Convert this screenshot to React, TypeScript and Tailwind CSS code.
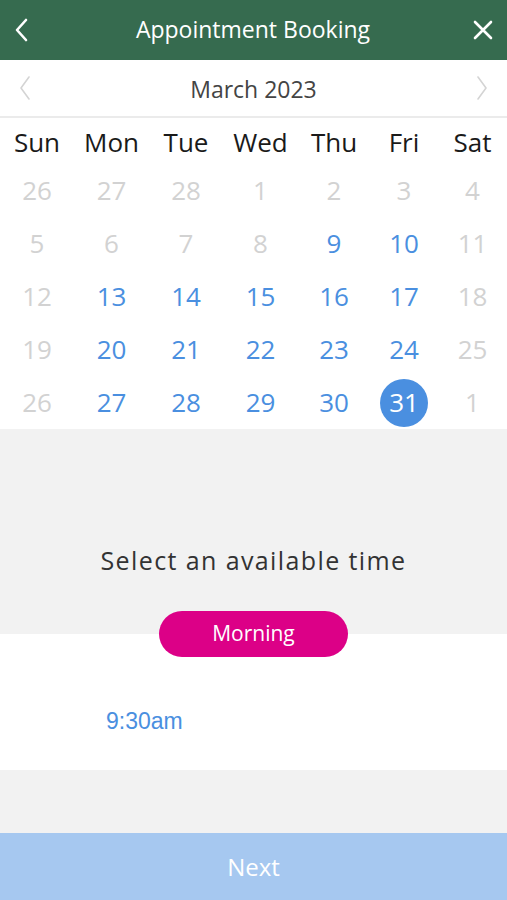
import { useState } from 'react';

const days = ['Sun', 'Mon', 'Tue', 'Wed', 'Thu', 'Fri', 'Sat'];

// each cell: [label, enabled]
const weeks: [number, boolean][][] = [
  [[26, false], [27, false], [28, false], [1, false], [2, false], [3, false], [4, false]],
  [[5, false], [6, false], [7, false], [8, false], [9, true], [10, true], [11, false]],
  [[12, false], [13, true], [14, true], [15, true], [16, true], [17, true], [18, false]],
  [[19, false], [20, true], [21, true], [22, true], [23, true], [24, true], [25, false]],
  [[26, false], [27, true], [28, true], [29, true], [30, true], [31, true], [1, false]],
];

const cols = 'grid grid-cols-[74px_75px_74px_75px_72px_68px_69px]';

export default function App() {
  const [selected, setSelected] = useState('4-5');

  return (
    <div className="w-[507px] h-[900px] flex flex-col bg-[#f2f2f2] font-['Open_Sans',sans-serif] overflow-hidden">
      <div className="h-[60px] bg-[#366b4f] flex items-center justify-between px-[14px] text-white">
        <svg width="16" height="26" viewBox="0 0 16 26" fill="none" stroke="currentColor" strokeWidth="2.6" strokeLinecap="round" strokeLinejoin="round">
          <path d="M12 3 L3 13 L12 23" />
        </svg>
        <h1 className="text-[23px] leading-none -mt-[1px] ml-[4px]">Appointment Booking</h1>
        <svg width="22" height="22" viewBox="0 0 22 22" fill="none" stroke="currentColor" strokeWidth="2.6" strokeLinecap="round" className="-mr-[1px]">
          <path d="M3 3 L19 19 M19 3 L3 19" />
        </svg>
      </div>

      <div className="bg-white">
        <div className="h-[58px] flex items-center justify-between px-[18px] border-b-2 border-[#ebebeb]">
          <svg width="14" height="26" viewBox="0 0 14 26" fill="none" stroke="#d4d4d4" strokeWidth="1.6" strokeLinecap="round" strokeLinejoin="round">
            <path d="M11 2 L3 13 L11 24" />
          </svg>
          <span className="text-[23px] text-[#444] leading-none mt-[2px]">March 2023</span>
          <svg width="14" height="26" viewBox="0 0 14 26" fill="none" stroke="#d4d4d4" strokeWidth="1.6" strokeLinecap="round" strokeLinejoin="round">
            <path d="M3 2 L11 13 L3 24" />
          </svg>
        </div>

        <div className={`${cols} h-[46px] pt-[3px] items-center text-center text-[26px] text-[#1a1a1a]`}>
          {days.map((d) => (
            <span key={d}>{d}</span>
          ))}
        </div>

        {weeks.map((week, wi) => (
          <div key={wi} className={`${cols} h-[53px] items-center text-center text-[26px]`}>
            {week.map(([n, on], di) => {
              const key = `${wi}-${di}`;
              const isSel = selected === key;
              return (
                <div key={key} className="flex justify-center">
                  <button
                    disabled={!on}
                    onClick={() => setSelected(key)}
                    className={`w-[48px] h-[48px] rounded-full flex items-center justify-center ${
                      isSel ? 'bg-[#4a8fe0] text-white' : on ? 'text-[#4a8fe0]' : 'text-[#d2d2d2]'
                    }`}
                  >
                    {n}
                  </button>
                </div>
              );
            })}
          </div>
        ))}
      </div>

      <div className="flex flex-col items-center pt-[114px]">
        <p className="text-[25px] tracking-[1.4px] text-[#333] leading-[34px]">Select an available time</p>
        <button className="relative z-10 mt-[34px] -mb-[23px] w-[189px] h-[46px] rounded-full bg-[#dc0087] text-white text-[21px]">
          Morning
        </button>
      </div>

      <div className="bg-white h-[136px] flex items-end pb-[37px] pl-[106px]">
        <span className="font-['Liberation_Sans',Arial,sans-serif] text-[23px] text-[#4a8fe0] leading-none">9:30am</span>
      </div>

      <div className="flex-1" />

      <button className="h-[67px] bg-[#a6c8f0] text-white text-[24px] flex items-center justify-center">
        Next
      </button>
    </div>
  );
}
